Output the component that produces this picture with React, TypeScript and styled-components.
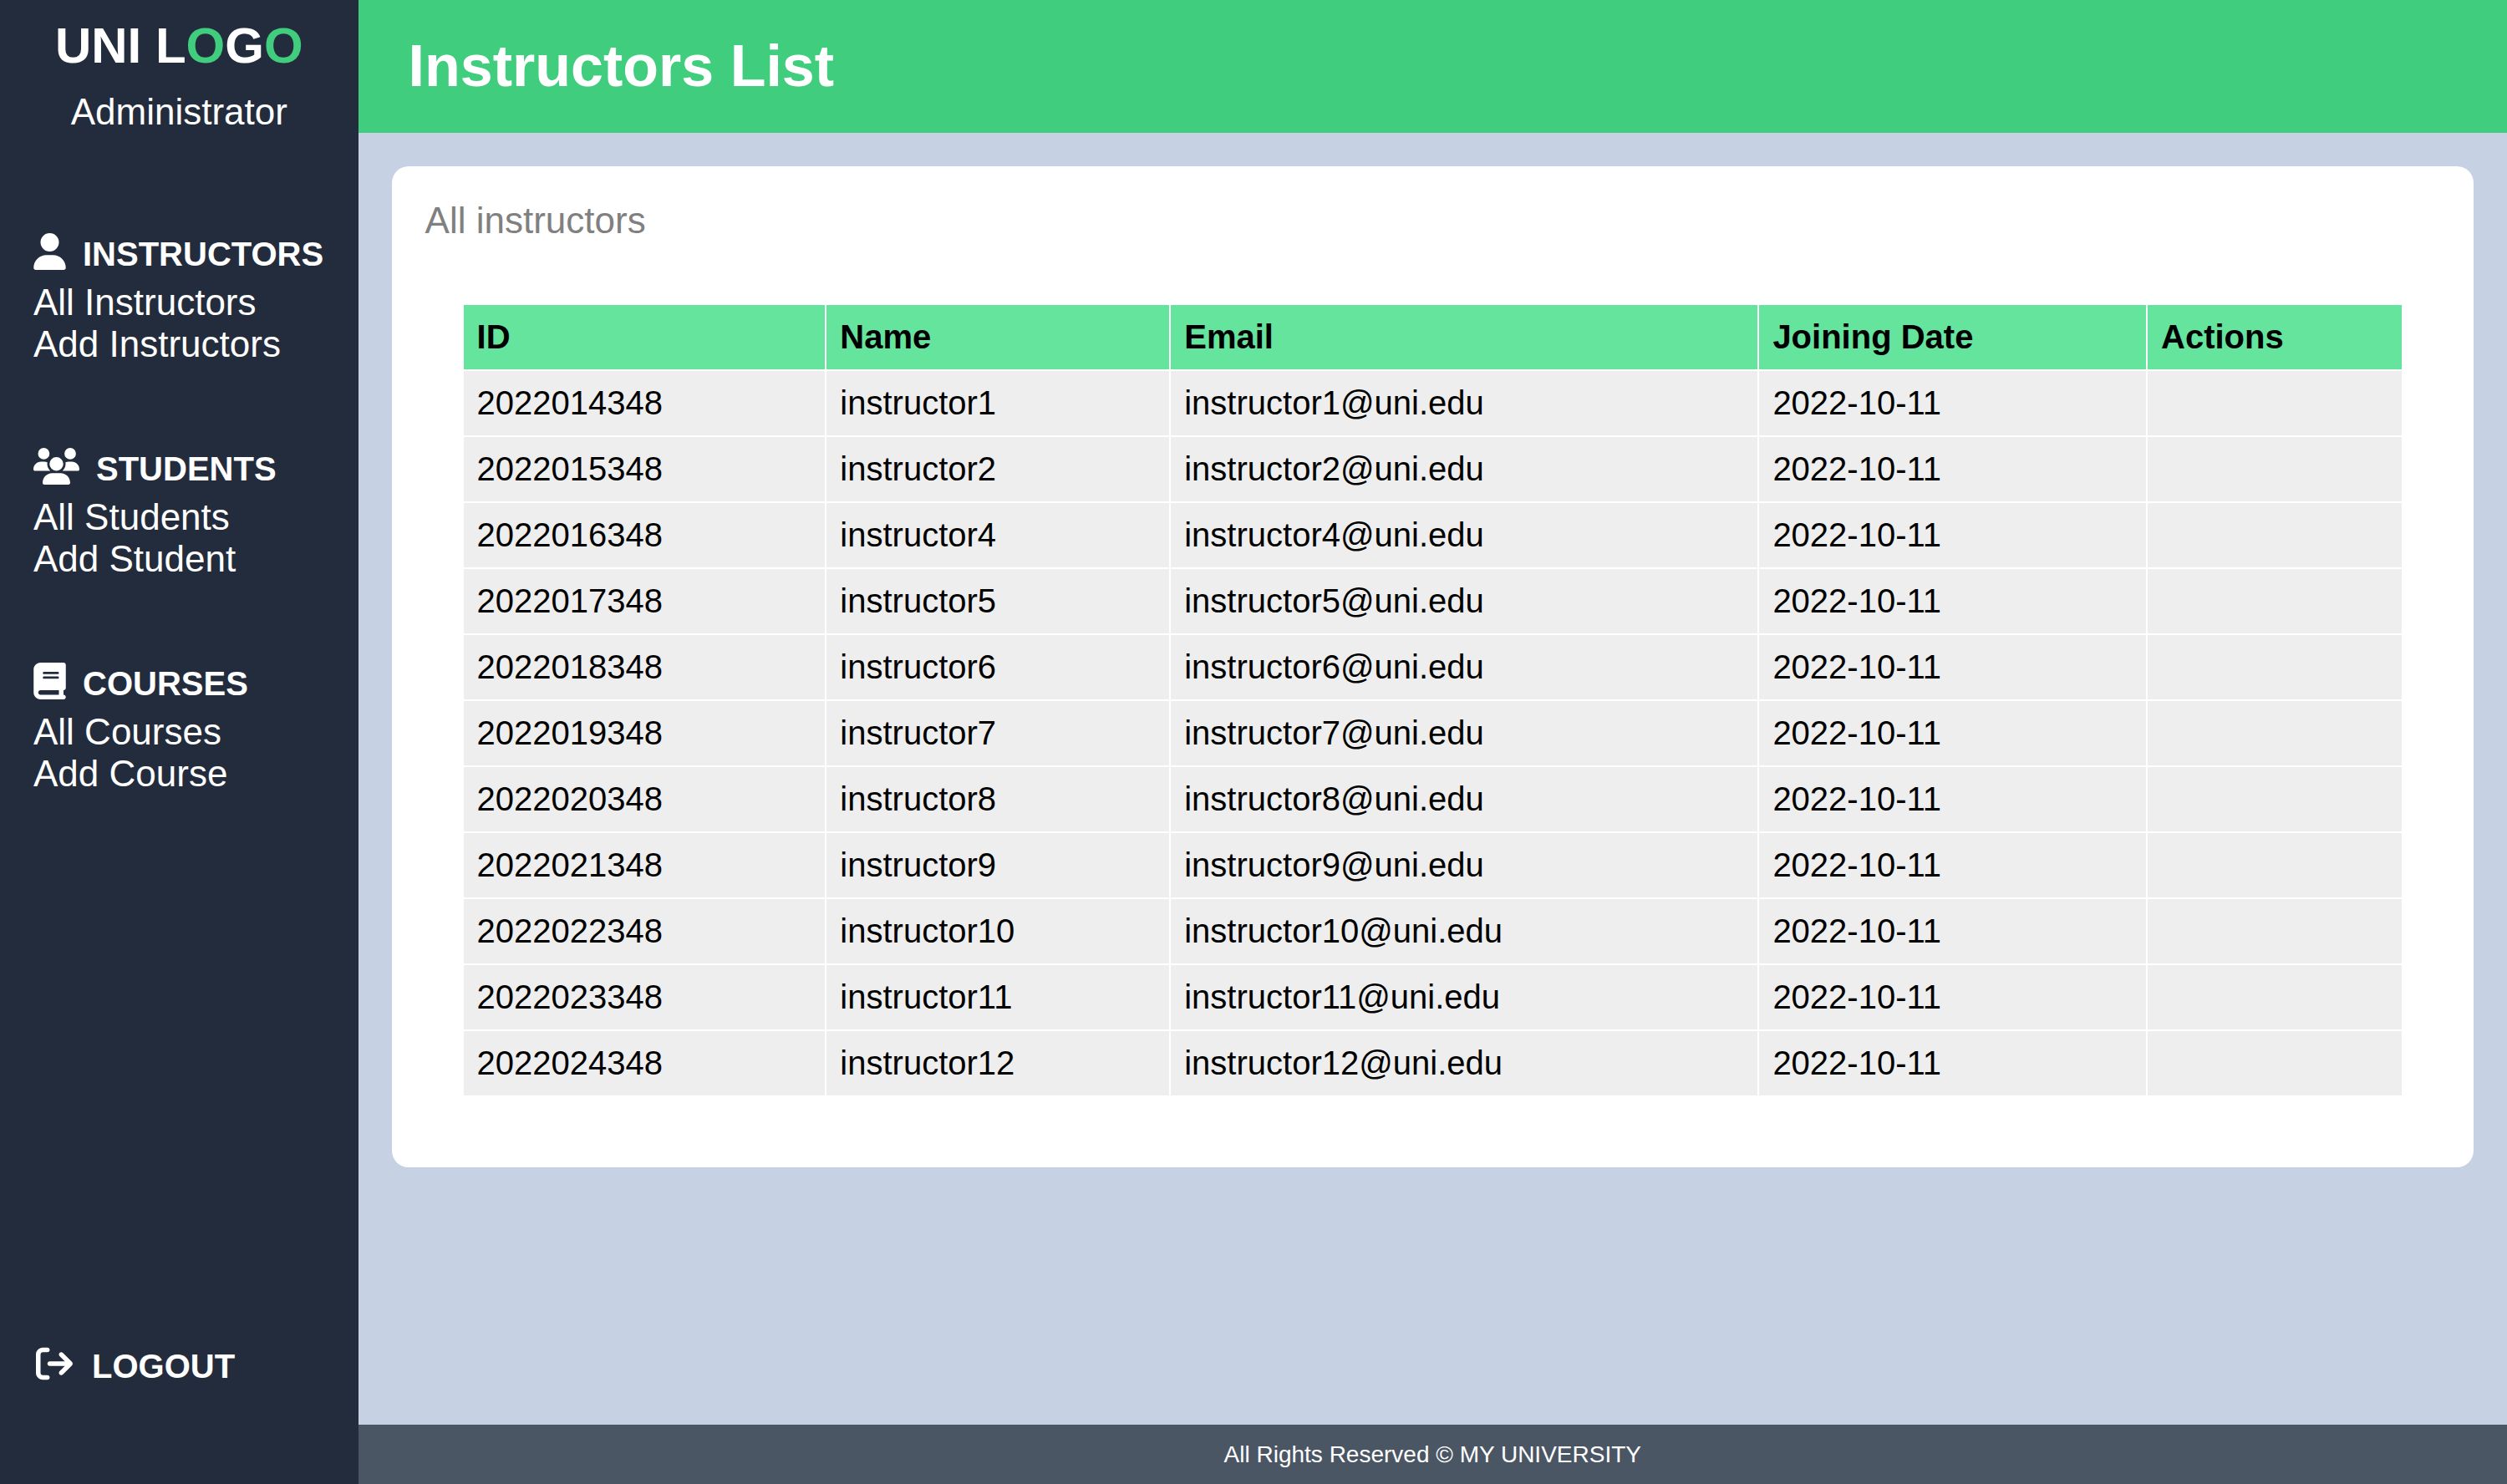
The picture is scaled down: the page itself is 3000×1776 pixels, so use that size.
import React from "react";
import styled, { createGlobalStyle } from "styled-components";
import { FaArrowRightFromBracket, FaBook, FaUser, FaUsers } from "react-icons/fa6";

const GlobalStyle = createGlobalStyle`
  *, *::before, *::after { box-sizing: border-box; }
  body {
    margin: 0;
    font-family: "Liberation Sans", Arial, sans-serif;
    font-size: 40px;
    color: #000;
  }
  h1, h2, p, ul { margin: 0; padding: 0; }
  a { color: inherit; text-decoration: none; }
`;

const Page = styled.div`
  display: grid;
  grid-template-columns: minmax(0, 1fr) minmax(0, 6fr);
  min-height: 100vh;
`;

const Sidebar = styled.aside`
  display: flex;
  flex-direction: column;
  padding: 20px 0 108px;
  background: #232c3c;
  color: #fff;
`;

const Brand = styled.div`
  display: flex;
  flex-direction: column;
  gap: 20px;
  margin-bottom: 120px;
  text-align: center;
`;

const Logo = styled.div`
  font-size: 60px;
  font-weight: 700;
  line-height: 69px;
`;

const Accent = styled.span`
  color: #40cd7e;
`;

const Role = styled.p`
  font-size: 44px;
  line-height: 50px;
`;

const Nav = styled.nav`
  display: flex;
  flex: 1;
  flex-direction: column;
  gap: 99px;
  padding-left: 40px;
`;

const NavHeading = styled.h2<{ $iconWidth: number }>`
  margin-bottom: 10px;
  font-size: 40px;
  font-weight: 700;
  line-height: 46px;
  white-space: nowrap;

  svg {
    width: ${(props) => props.$iconWidth}px;
    height: 44px;
    margin-right: 20px;
    vertical-align: -5px;
  }
`;

const NavList = styled.ul`
  font-size: 44px;
  line-height: 50px;
  list-style: none;
`;

const Logout = styled.div`
  margin-top: auto;
`;

const Main = styled.div`
  display: flex;
  flex-direction: column;
  background: #c7d1e4;
`;

const Header = styled.header`
  padding: 40px 60px;
  background: #40cd7e;
  color: #fff;
`;

const Title = styled.h1`
  font-size: 70px;
  line-height: 79px;
`;

const Content = styled.main`
  flex: 1;
  padding: 40px;
`;

const Card = styled.section`
  padding: 40px;
  border-radius: 20px;
  background: #fff;
`;

const CardTitle = styled.p`
  margin-bottom: 30px;
  color: #808080;
  font-size: 44px;
  line-height: 50px;
`;

const TableArea = styled.div`
  padding: 44px;
`;

const Table = styled.table`
  width: 100%;
  border-spacing: 2px;
  line-height: 45px;
  text-align: left;
`;

const HeadCell = styled.th`
  padding: 16px;
  background: #65e49d;
`;

const Cell = styled.td`
  padding: 16px;
  background: #eee;
`;

const Footer = styled.footer`
  padding: 20px;
  background: #4b5665;
  color: #fff;
  font-size: 28px;
  line-height: 31px;
  text-align: center;
`;

const sections = [
  { title: "INSTRUCTORS", icon: <FaUser />, iconWidth: 39, links: ["All Instructors", "Add Instructors"] },
  { title: "STUDENTS", icon: <FaUsers />, iconWidth: 55, links: ["All Students", "Add Student"] },
  { title: "COURSES", icon: <FaBook />, iconWidth: 39, links: ["All Courses", "Add Course"] },
];

const columns = ["ID", "Name", "Email", "Joining Date", "Actions"];

const instructors = [1, 2, 4, 5, 6, 7, 8, 9, 10, 11, 12].map((n, i) => ({
  id: 2022014348 + i * 1000,
  name: `instructor${n}`,
  email: `instructor${n}@uni.edu`,
  joined: "2022-10-11",
}));

export default function App() {
  return (
    <>
      <GlobalStyle />
      <Page>
        <Sidebar>
          <Brand>
            <Logo>
              UNI L<Accent>O</Accent>G<Accent>O</Accent>
            </Logo>
            <Role>Administrator</Role>
          </Brand>
          <Nav>
            {sections.map((section) => (
              <div key={section.title}>
                <NavHeading $iconWidth={section.iconWidth}>
                  {section.icon}
                  {section.title}
                </NavHeading>
                <NavList>
                  {section.links.map((label) => (
                    <li key={label}>
                      <a href="#">{label}</a>
                    </li>
                  ))}
                </NavList>
              </div>
            ))}
            <Logout>
              <NavHeading $iconWidth={50}>
                <a href="#">
                  <FaArrowRightFromBracket viewBox="-32 0 576 512" />
                  LOGOUT
                </a>
              </NavHeading>
            </Logout>
          </Nav>
        </Sidebar>
        <Main>
          <Header>
            <Title>Instructors List</Title>
          </Header>
          <Content>
            <Card>
              <CardTitle>All instructors</CardTitle>
              <TableArea>
                <Table>
                  <thead>
                    <tr>
                      {columns.map((column) => (
                        <HeadCell key={column} scope="col">
                          {column}
                        </HeadCell>
                      ))}
                    </tr>
                  </thead>
                  <tbody>
                    {instructors.map((row) => (
                      <tr key={row.id}>
                        <Cell>{row.id}</Cell>
                        <Cell>{row.name}</Cell>
                        <Cell>{row.email}</Cell>
                        <Cell>{row.joined}</Cell>
                        <Cell />
                      </tr>
                    ))}
                  </tbody>
                </Table>
              </TableArea>
            </Card>
          </Content>
          <Footer>All Rights Reserved © MY UNIVERSITY</Footer>
        </Main>
      </Page>
    </>
  );
}
